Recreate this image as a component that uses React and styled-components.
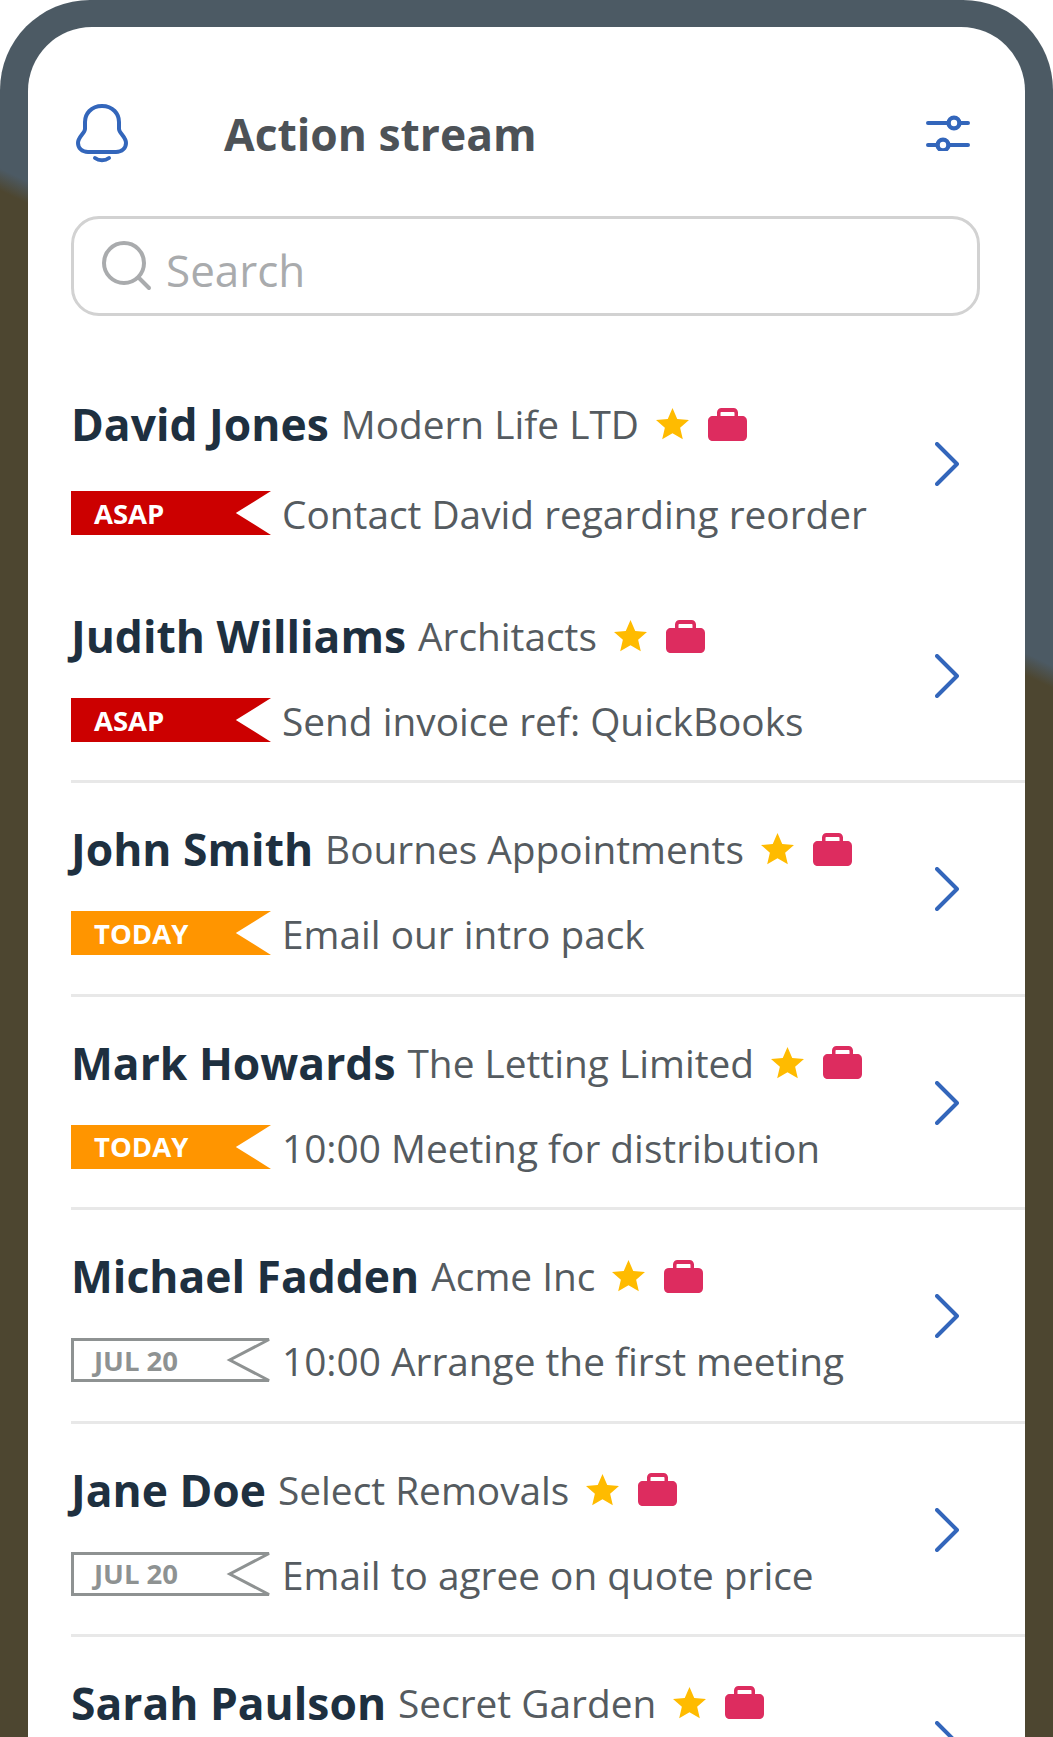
import React from "react";
import styled, { createGlobalStyle } from "styled-components";

const rows = [
  { name: "David Jones", company: "Modern Life LTD", tag: "ASAP", kind: "asap", task: "Contact David regarding reorder", first: true },
  { name: "Judith Williams", company: "Architacts", tag: "ASAP", kind: "asap", task: "Send invoice ref: QuickBooks" },
  { name: "John Smith", company: "Bournes Appointments", tag: "TODAY", kind: "today", task: "Email our intro pack" },
  { name: "Mark Howards", company: "The Letting Limited", tag: "TODAY", kind: "today", task: "10:00 Meeting for distribution" },
  { name: "Michael Fadden", company: "Acme Inc", tag: "JUL 20", kind: "date", task: "10:00 Arrange the first meeting" },
  { name: "Jane Doe", company: "Select Removals", tag: "JUL 20", kind: "date", task: "Email to agree on quote price" },
  { name: "Sarah Paulson", company: "Secret Garden" },
];

const tagColors = { asap: "#cc0000", today: "#ff9500", date: "#8e9292" };

const BellIcon = () => (
  <svg width="52" height="60" viewBox="0 0 52 60" fill="none" stroke="#3366bb" strokeWidth="4" strokeLinecap="round" strokeLinejoin="round">
    <path d="M26 2C15 2 9 10 9 18v7c0 4-7 8-7 14 0 5 4 9 10 9h28c6 0 10-4 10-9 0-6-7-10-7-14v-7C43 10 37 2 26 2Z" />
    <path d="M19 54c4 3 10 3 14 0" />
  </svg>
);

const SlidersIcon = () => (
  <svg width="44" height="38" viewBox="0 0 44 38" fill="none" stroke="#3366bb" strokeWidth="4" strokeLinecap="round">
    <path d="M2 10h20M34 10h8M2 32h9M23 32h19" />
    <circle cx="28" cy="10" r="5.4" strokeWidth="4.4" />
    <circle cx="17" cy="32" r="5.4" strokeWidth="4.4" />
  </svg>
);

const SearchIcon = () => (
  <svg width="50" height="50" viewBox="0 0 50 50" fill="none" stroke="#a9abad" strokeWidth="4" strokeLinecap="round">
    <circle cx="22" cy="22" r="20" />
    <path d="M37 37l10 10" />
  </svg>
);

const StarIcon = () => (
  <svg width="33" height="32" viewBox="0 0 32 31" fill="#ffbb00">
    <path d="M16 0l4.600 10.600 11.400 1-8.600 7.500 2.600 11.200L16 24.400 6 30.300l2.600-11.200L0 11.600l11.400-1Z" />
  </svg>
);

const BagIcon = () => (
  <svg width="39" height="33" viewBox="0 0 39 33" fill="#dd2c5f">
    <path
      fillRule="evenodd"
      d="M9 8V4.500C9 2 11 0 13.500 0h12C28 0 30 2 30 4.500V8h4c3 0 5 2 5 5v15c0 3-2 5-5 5H5c-3 0-5-2-5-5V13c0-3 2-5 5-5Zm3.500 0h14V5c0-.6-.4-1-1-1h-12c-.6 0-1 .4-1 1Z"
    />
  </svg>
);

const ChevronIcon = () => (
  <svg width="24" height="44" viewBox="0 0 24 44" fill="none" stroke="#3366bb" strokeWidth="4" strokeLinecap="round" strokeLinejoin="round">
    <path d="M2 2l20 20L2 42" />
  </svg>
);

const Ribbon = ({ kind }) => {
  const outlined = kind === "date";
  return (
    <RibbonSvg viewBox="0 0 199 44" preserveAspectRatio="none">
      {outlined ? (
        <path d="M1.500 1.500H197L158 22l39 20.500H1.500Z" fill="none" stroke={tagColors[kind]} strokeWidth="3" />
      ) : (
        <path d="M0 0H199L164 22l35 22H0Z" fill={tagColors[kind]} />
      )}
    </RibbonSvg>
  );
};

const App = () => {
  return (
    <Page>
      <GlobalStyle />
      <Screen>
        <Header>
          <BellSlot>
            <BellIcon />
          </BellSlot>
          <Title>Action stream</Title>
          <SlidersSlot>
            <SlidersIcon />
          </SlidersSlot>
        </Header>
        <SearchBar>
          <SearchIcon />
          <SearchText>Search</SearchText>
        </SearchBar>
        <List>
          {rows.map((row) => (
            <Row key={row.name} $first={row.first}>
              <RowBody>
                <NameLine>
                  <Name>{row.name}</Name>
                  <Company>{row.company}</Company>
                  <Badges>
                    <StarIcon />
                    <BagIcon />
                  </Badges>
                </NameLine>
                {row.tag && (
                  <TaskLine $first={row.first}>
                    <Tag>
                      <Ribbon kind={row.kind} />
                      <TagLabel $kind={row.kind}>{row.tag}</TagLabel>
                    </Tag>
                    <Task>{row.task}</Task>
                  </TaskLine>
                )}
              </RowBody>
              <ChevronSlot>
                <ChevronIcon />
              </ChevronSlot>
            </Row>
          ))}
        </List>
      </Screen>
    </Page>
  );
};

const GlobalStyle = createGlobalStyle`
  html, body {
    margin: 0;
    padding: 0;
    background: #ffffff;
  }

  body {
    font-family: "Open Sans", "Liberation Sans", sans-serif;
  }
`;

const Page = styled.div`
  width: 1053px;
  height: 1737px;
  box-sizing: border-box;
  overflow: hidden;
  padding: 27px 28px 0 28px;
  border-radius: 90px 90px 0 0;
  background: linear-gradient(205.3deg, #4c5a64 29.8%, #4d4630 30.8%);
`;

const Screen = styled.div`
  height: 100%;
  box-sizing: border-box;
  overflow: hidden;
  padding-top: 77px;
  background: #ffffff;
  border-radius: 64px 64px 0 0;
`;

const Header = styled.div`
  height: 60px;
  display: flex;
  align-items: center;
  padding: 0 55px 0 48px;
`;

const BellSlot = styled.div`
  width: 52px;
  height: 60px;
  flex: none;
`;

const Title = styled.h1`
  margin: 0 0 0 96px;
  font-size: 44.4px;
  font-weight: 700;
  line-height: 60px;
  color: #4d5257;
`;

const SlidersSlot = styled.div`
  width: 44px;
  height: 38px;
  margin: -4px 0 0 auto;
`;

const SearchBar = styled.div`
  width: 909px;
  height: 100px;
  box-sizing: border-box;
  margin: 52px 0 0 43px;
  padding: 0 0 0 28px;
  display: flex;
  align-items: center;
  gap: 14px;
  border: 3px solid #d2d2d2;
  border-radius: 28px;
`;

const SearchText = styled.span`
  padding-top: 8px;
  font-size: 44px;
  color: #a9abad;
`;

const List = styled.div`
  margin-top: 40px;
  padding-left: 43px;
`;

const Row = styled.div`
  height: ${(p) => (p.$first ? "214px" : "213.4px")};
  box-sizing: border-box;
  display: flex;
  padding-top: ${(p) => (p.$first ? "46px" : "44px")};
  border-bottom: 3px solid #e8e8e8;

  ${(p) => p.$first && "border-bottom-color: transparent;"}
`;

const RowBody = styled.div`
  flex: 1;
  min-width: 0;
`;

const NameLine = styled.div`
  height: 44px;
  display: flex;
  align-items: center;
  white-space: nowrap;
`;

const Name = styled.span`
  font-size: 44.4px;
  font-weight: 700;
  color: #1e3040;
`;

const Company = styled.span`
  margin-left: 12px;
  font-size: 38.8px;
  color: #555b60;
`;

const Badges = styled.span`
  margin-left: 17px;
  display: flex;
  align-items: center;
  gap: 19px;
`;

const TaskLine = styled.div`
  margin-top: ${(p) => (p.$first ? "40px" : "35px")};
  display: flex;
  align-items: center;
  gap: 11px;
`;

const Tag = styled.div`
  position: relative;
  width: 200px;
  height: 44px;
  flex: none;
  display: flex;
  align-items: center;
  padding-left: 23px;
  box-sizing: border-box;
`;

const RibbonSvg = styled.svg`
  position: absolute;
  inset: 0;
  width: 100%;
  height: 100%;
`;

const TagLabel = styled.span`
  position: relative;
  font-size: 27.5px;
  font-weight: 700;
  color: ${(p) => (p.$kind === "date" ? tagColors.date : "#ffffff")};
`;

const Task = styled.span`
  padding-top: 2px;
  font-size: 38.8px;
  color: #555b60;
  white-space: nowrap;
`;

const ChevronSlot = styled.div`
  width: 24px;
  height: 44px;
  flex: none;
  margin: 40px 66px 0 0;
`;

export default App;
